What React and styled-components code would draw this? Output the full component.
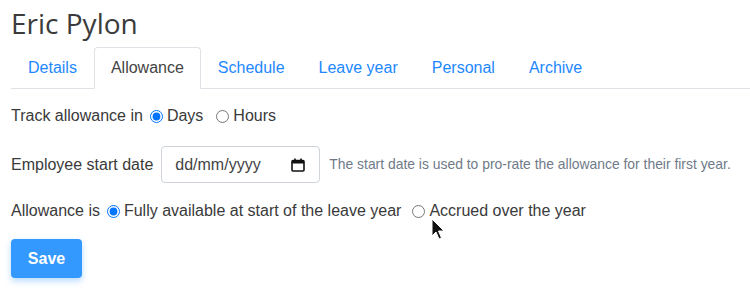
import React from "react";
import styled, { createGlobalStyle } from "styled-components";

const Global = createGlobalStyle`
  html, body { margin: 0; padding: 0; background: #fff; }
  body {
    font-family: "Liberation Sans", Arial, sans-serif;
    font-size: 16px;
    line-height: 1.5;
    color: #3a3a3a;
  }
  * { box-sizing: border-box; }
`;

const Page = styled.div`
  padding: 4px 0 0 11px;
  position: relative;
  width: 750px;
  height: 293px;
  overflow: hidden;
`;

const Title = styled.h1`
  margin: 0;
  font-family: "Open Sans", "Noto Sans", sans-serif;
  font-weight: 400;
  font-size: 28px;
  line-height: 38px;
  color: #3b3b3b;
  letter-spacing: 0;
`;

const Tabs = styled.nav`
  display: flex;
  margin-top: 5px;
  border-bottom: 1px solid #dee2e6;
`;

const Tab = styled.a`
  display: block;
  padding: 8px 16px;
  border: 1px solid transparent;
  border-top-left-radius: 4px;
  border-top-right-radius: 4px;
  margin-bottom: -1px;
  color: ${(p) => (p.$active ? "#444" : "#1e88ff")};
  background: ${(p) => (p.$active ? "#fff" : "transparent")};
  border-color: ${(p) => (p.$active ? "#dee2e6 #dee2e6 #fff" : "transparent")};
  text-decoration: none;
  line-height: 24px;
`;

const Form = styled.div`
  display: flex;
  flex-direction: column;
  padding-top: 15px;
`;

const Row = styled.div`
  display: flex;
  align-items: center;
  height: ${(p) => p.$h || 24}px;
  margin-bottom: ${(p) => p.$mb || 0}px;
`;

const Label = styled.span`
  margin-right: ${(p) => p.$mr || 4}px;
`;

const RadioLabel = styled.label`
  display: inline-flex;
  align-items: center;
  margin-right: ${(p) => p.$mr || 0}px;
  input {
    margin: 0 4px 0 3px;
    width: 13px;
    height: 13px;
  }
`;

const DateBox = styled.div`
  display: flex;
  align-items: center;
  justify-content: space-between;
  width: 159px;
  height: 37px;
  padding: 0 14px 0 13px;
  border: 1px solid #ced4da;
  border-radius: 4px;
  font-size: 16px;
  color: #444;
  background: #fff;
`;

const Help = styled.span`
  margin-left: 9px;
  font-size: 13.9px;
  color: #6f7a88;
`;

const SaveButton = styled.button`
  width: 71px;
  height: 39px;
  border: none;
  border-radius: 4px;
  background: #3399ff;
  color: #fff;
  font-family: "Liberation Sans", Arial, sans-serif;
  font-weight: 700;
  font-size: 16px;
  box-shadow: 0 3px 6px rgba(51, 153, 255, 0.35);
  cursor: pointer;
`;

const Cursor = styled.svg`
  position: absolute;
  left: 431px;
  top: 218px;
`;

const CalendarIcon = () => (
  <svg width="14" height="14" viewBox="0 0 14 14">
    <rect x="1" y="2.5" width="12" height="10.5" rx="1" fill="none" stroke="#111" strokeWidth="1.6" />
    <rect x="1" y="2.5" width="12" height="3" fill="#111" />
    <rect x="3.2" y="0.5" width="1.6" height="3" fill="#111" />
    <rect x="9.2" y="0.5" width="1.6" height="3" fill="#111" />
  </svg>
);

export default function App() {
  return (
    <>
      <Global />
      <Page>
        <Title>Eric Pylon</Title>
        <Tabs>
          <Tab href="#">Details</Tab>
          <Tab href="#" $active>Allowance</Tab>
          <Tab href="#">Schedule</Tab>
          <Tab href="#">Leave year</Tab>
          <Tab href="#">Personal</Tab>
          <Tab href="#">Archive</Tab>
        </Tabs>
        <Form>
          <Row $mb={18}>
            <Label>Track allowance in</Label>
            <RadioLabel $mr={10}>
              <input type="radio" name="unit" defaultChecked />
              Days
            </RadioLabel>
            <RadioLabel>
              <input type="radio" name="unit" />
              Hours
            </RadioLabel>
          </Row>
          <Row $h={37} $mb={16}>
            <Label $mr={8}>Employee start date</Label>
            <DateBox>
              <span>dd/mm/yyyy</span>
              <CalendarIcon />
            </DateBox>
            <Help>The start date is used to pro-rate the allowance for their first year.</Help>
          </Row>
          <Row $mb={16}>
            <Label>Allowance is</Label>
            <RadioLabel $mr={8}>
              <input type="radio" name="acc" defaultChecked />
              Fully available at start of the leave year
            </RadioLabel>
            <RadioLabel>
              <input type="radio" name="acc" />
              Accrued over the year
            </RadioLabel>
          </Row>
          <div>
            <SaveButton>Save</SaveButton>
          </div>
        </Form>
        <Cursor width="14" height="24" viewBox="0 0 14 24">
          <path d="M1 1 L1 18 L5 14 L8 21 L10.5 20 L7.5 13 L13 13 Z" fill="#111" stroke="#fff" strokeWidth="1" />
        </Cursor>
      </Page>
    </>
  );
}
